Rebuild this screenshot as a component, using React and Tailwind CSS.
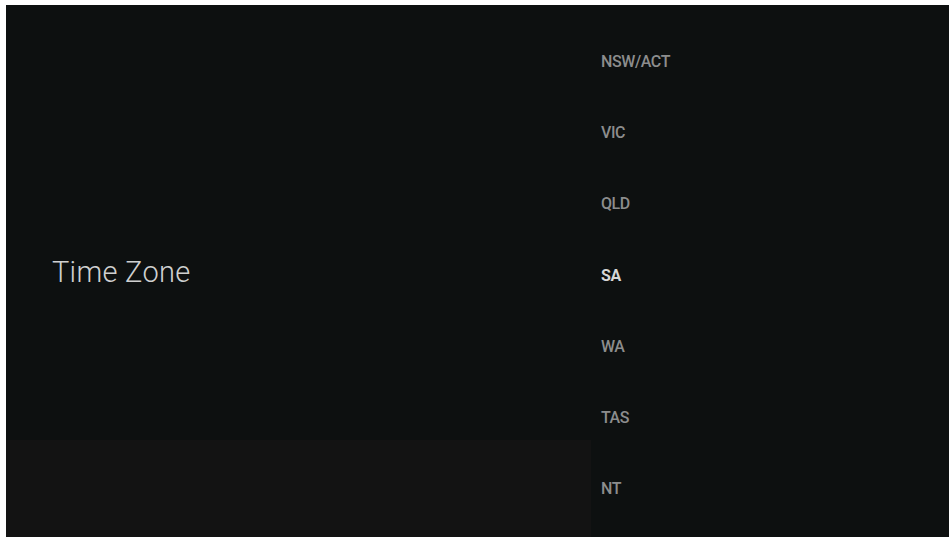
import React from "react";

const ZONES = ["NSW/ACT", "VIC", "QLD", "SA", "WA", "TAS", "NT"];

export default function App() {
  const selected = "SA";

  return (
    <div className="w-full h-[537px] bg-white pt-[5px] pl-[6px] pr-[2px] overflow-hidden" style={{ fontFamily: "Roboto, 'Liberation Sans', sans-serif" }}>
      <div className="flex h-full bg-[#0d1010]">
        {/* title column */}
        <div className="w-[585px] flex flex-col">
          <div className="flex-1 pl-[46px] pt-[250px]">
            <h1 className="text-[29px] leading-[34px] font-light text-[#cfd0d0] tracking-[0.3px]">Time Zone</h1>
          </div>
          <div className="h-[97px] bg-[#131313]" />
        </div>

        {/* region list */}
        <ul className="flex-1 flex flex-col pt-[21px] pl-[10px]">
          {ZONES.map((z) => (
            <li
              key={z}
              className={
                "h-[71.3px] flex items-center text-[16px] tracking-[-0.4px] " +
                (z === selected ? "font-bold text-[#d6d6d6]" : "font-medium text-[#8c8d8d]")
              }
            >
              {z}
            </li>
          ))}
        </ul>
      </div>
    </div>
  );
}
